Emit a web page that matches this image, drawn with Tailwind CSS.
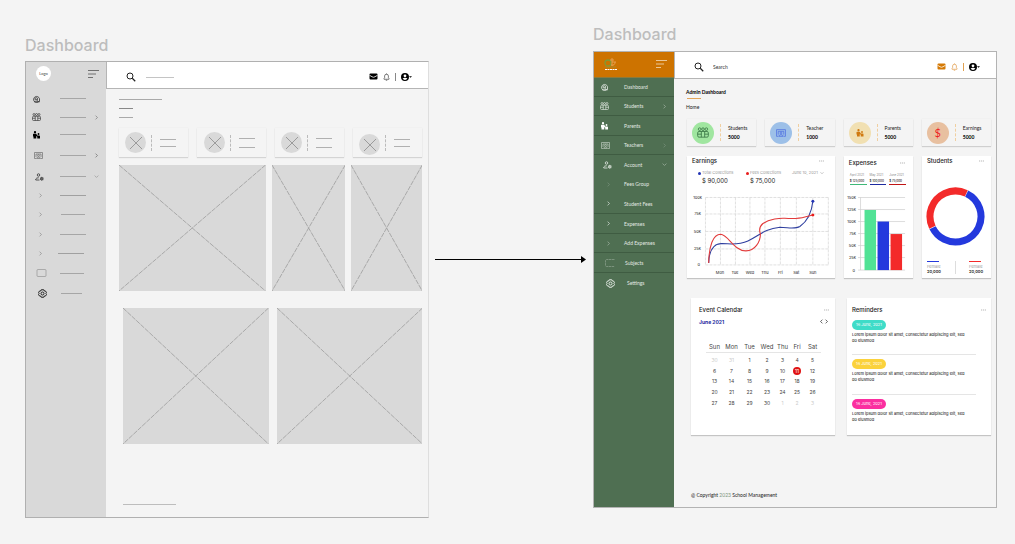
<!DOCTYPE html>
<html lang="en">
<head>
<meta charset="utf-8">
<title>Dashboard wireframe and design</title>
<script src="https://cdn.jsdelivr.net/npm/@tailwindcss/browser@4"></script>
</head>
<body class="bg-[#f4f4f4] font-['Lato',sans-serif] text-[5px] leading-[8px] text-[#333]">

<svg class="hidden" aria-hidden="true">
  <symbol id="i-search" viewBox="0 0 20 20"><circle cx="8" cy="8" r="6" fill="none" stroke="currentColor" stroke-width="2"/><path d="M12.5 12.5 18.5 18.5" stroke="currentColor" stroke-width="2.4"/></symbol>
  <symbol id="i-mail" viewBox="0 0 18 14"><rect x="1" y="1" width="16" height="12" rx="2" fill="currentColor"/><path d="M1 4.500 6 7.500Q9 9.500 12 7.500L17 4.500" fill="none" stroke="#fff" stroke-width="1.600"/></symbol>
  <symbol id="i-bell" viewBox="0 0 14 16"><path d="M2 12.500V11L3.200 9.500V6Q3.200 2.500 7 2.500T10.800 6V9.500L12 11V12.500ZM5.500 14.500H8.500M7 1V2.500" fill="none" stroke="currentColor" stroke-width="1.400"/></symbol>
  <symbol id="i-user" viewBox="0 0 22 16"><path fill-rule="evenodd" fill="currentColor" d="M8 0a8 8 0 1 0 0 16A8 8 0 0 0 8 0ZM8 2.800a2.800 2.800 0 1 1 0 5.600 2.800 2.800 0 0 1 0-5.600ZM3.200 11.200Q5 9.600 8 9.600T12.800 11.200Q11 14 8 14T3.200 11.200Z"/><path fill="currentColor" d="M16 6.500H22L19 9.500Z"/></symbol>
  <symbol id="i-dash" viewBox="0 0 16 16"><g fill="none" stroke="currentColor" stroke-width="1.600"><path d="M13 12.500A6 6 0 1 1 14 7.500V13M3 13.500H14.500"/><path d="M5 9V6.500Q7.500 4 10 6.500V9.500H5M8 10 11.500 13"/></g></symbol>
  <symbol id="i-students" viewBox="0 0 18 16"><g fill="none" stroke="currentColor" stroke-width="1.300"><circle cx="4" cy="3" r="2"/><circle cx="9" cy="3" r="2"/><circle cx="14" cy="3" r="2"/><rect x="1" y="6.500" width="16" height="8.500" rx="2"/><path d="M6.500 6.500V15M11.500 6.500V15M1 10.500H6.500M11.500 10.500H17"/></g></symbol>
  <symbol id="i-parents" viewBox="0 0 16 16"><g fill="currentColor"><circle cx="5" cy="2.500" r="2.300"/><path d="M2 5.500H7.500L9.500 9H13.500Q15 9 15 10.500V15H9.500V11.500L7.500 10V15H2V11H1V6.500Q1 5.500 2 5.500Z"/><circle cx="12" cy="6" r="1.900"/></g></symbol>
  <symbol id="i-teachers" viewBox="0 0 18 14"><g fill="none" stroke="currentColor" stroke-width="1.300"><path d="M4 13H1V1H17V13H14"/><path d="M4 10V4H14V10"/><circle cx="9" cy="7" r="1.800"/><path d="M5 13Q5.500 10 9 10T13 13Z"/></g></symbol>
  <symbol id="i-account" viewBox="0 0 18 16"><g fill="none" stroke="currentColor" stroke-width="1.600"><circle cx="7" cy="4" r="2.500"/><path d="M9 14H1.500V12Q2.500 9.500 7.500 9.500"/><circle cx="13.500" cy="11.500" r="2.600"/><path d="M13.500 7.500V15.500M10 9.500 17 13.500M17 9.500 10 13.500" stroke-width=".9"/></g></symbol>
  <symbol id="i-right" viewBox="0 0 8 8"><path d="M2.500 1 5.500 4 2.500 7" fill="none" stroke="currentColor" stroke-width="1.100"/></symbol>
  <symbol id="i-left" viewBox="0 0 8 8"><path d="M5.500 1 2.500 4 5.500 7" fill="none" stroke="currentColor" stroke-width="1.100"/></symbol>
  <symbol id="i-down" viewBox="0 0 8 8"><path d="M1 2.500 4 5.500 7 2.500" fill="none" stroke="currentColor" stroke-width="1.100"/></symbol>
  <symbol id="i-box" viewBox="0 0 20 16"><rect x="1" y="1" width="18" height="14" rx="2" fill="none" stroke="currentColor" stroke-width="1.200"/></symbol>
  <symbol id="i-book" viewBox="0 0 20 16"><path d="M19 1H3Q1 1 1 3V13Q1 15 3 15H19" fill="none" stroke="currentColor" stroke-width="1.200" stroke-dasharray="5 1"/></symbol>
  <symbol id="i-gear" viewBox="0 0 18 18"><g fill="none" stroke="currentColor"><path stroke-width="2" d="M6.500 1.500H11.500L12 3.500 15 4 17 7.500 15.800 9 17 11 15 14 12 14.500 11.500 16.500H6.500L6 14.500 3 14 1 11 2.200 9 1 7.500 3 4 6 3.500Z"/><circle cx="9" cy="9" r="3" stroke-width="2"/></g></symbol>
  <symbol id="i-menu" viewBox="0 0 12 10"><path d="M1 1.500H12M1 5H9M1 8.500H6" stroke="currentColor" stroke-width=".8"/></symbol>
  <symbol id="i-dots" viewBox="0 0 6 2"><path d="M0 1H1.400M2.300 1H3.700M4.600 1H6" stroke="currentColor"/></symbol>
  <symbol id="i-cross" viewBox="0 0 10 10"><path d="M0 0 10 10M10 0 0 10" stroke="#8f8f8f" stroke-width=".7"/></symbol>
</svg>

<main class="grid min-h-screen grid-cols-[404fr_164fr_404fr] items-start pr-[18px] pl-[25px]">

  <!-- Wireframe -->
  <section class="pt-9">
    <h2 class="mb-[7px] font-['Inter',sans-serif] text-[16px] leading-[18px] font-medium text-[#bdbdbd]">Dashboard</h2>
    <div class="flex border border-[#b0b0b0] border-r-[#dedede]">
      <aside class="w-20 shrink-0 bg-[#d9d9d9] text-[#8a8a8a]">
        <div class="flex h-[27px] items-center justify-between pr-[7px] pb-[4px] pl-[10px]">
          <span class="flex size-[15px] items-center justify-center rounded-full bg-white text-[4px] text-[#444]">Logo</span>
          <button aria-label="Menu" class="text-[#555]"><svg class="h-[10px] w-3"><use href="#i-menu"/></svg></button>
        </div>
        <ul>
          <li class="flex h-[19px] items-center pl-[6px] text-[#333]"><svg class="h-2 w-[9px]"><use href="#i-dash"/></svg><i class="ml-[19px] h-px w-[26px] bg-[#a6a6a6]"></i></li>
          <li class="flex h-[18px] items-center pl-[6px] text-[#333]"><svg class="h-2 w-[9px]"><use href="#i-students"/></svg><i class="ml-[19px] h-px w-[26px] bg-[#a6a6a6]"></i><svg class="ml-2 size-[5px] text-[#777]"><use href="#i-right"/></svg></li>
          <li class="flex h-[17px] items-center pl-[6px] text-black"><svg class="h-2 w-[9px]"><use href="#i-parents"/></svg><i class="ml-[19px] h-px w-[26px] bg-[#a6a6a6]"></i></li>
          <li class="flex h-[25px] items-center pl-[8px] text-[#666]"><svg class="h-[7px] w-[9px]"><use href="#i-teachers"/></svg><i class="ml-[17px] h-px w-[26px] bg-[#a6a6a6]"></i><svg class="ml-2 size-[5px]"><use href="#i-right"/></svg></li>
          <li class="flex h-[17px] items-center pl-[9px] text-[#333]"><svg class="h-2 w-[9px]"><use href="#i-account"/></svg><i class="ml-4 h-px w-[26px] bg-[#a6a6a6]"></i><svg class="ml-2 size-[5px] text-[#999]"><use href="#i-down"/></svg></li>
          <li class="flex h-[20px] items-center pl-3"><svg class="size-[5px]"><use href="#i-right"/></svg><i class="ml-[17px] h-px w-[26px] bg-[#a0a0a0]"></i></li>
          <li class="flex h-[19px] items-center pl-3"><svg class="size-[5px]"><use href="#i-right"/></svg><i class="ml-[18px] h-px w-6 bg-[#a6a6a6]"></i></li>
          <li class="flex h-[20px] items-center pl-3"><svg class="size-[5px]"><use href="#i-right"/></svg><i class="ml-[17px] h-px w-[26px] bg-[#a6a6a6]"></i></li>
          <li class="flex h-[18px] items-center pl-3"><svg class="size-[5px]"><use href="#i-right"/></svg><i class="ml-[15px] h-px w-[26px] bg-[#a0a0a0]"></i></li>
          <li class="flex h-[22px] items-center pl-[10px]"><svg class="h-2 w-[11px]"><use href="#i-box"/></svg><i class="ml-[13px] h-px w-[24px] bg-[#a6a6a6]"></i></li>
          <li class="flex h-[19px] items-center pl-3 text-[#222]"><svg class="size-[9px]"><use href="#i-gear"/></svg><i class="ml-[14px] h-px w-[21px] bg-[#a6a6a6]"></i></li>
        </ul>
      </aside>
      <div class="min-w-0 grow">
        <header class="flex h-[27px] items-center border-b border-l border-[#b5b5b5] bg-white pr-4 pl-[19px] text-black">
          <svg class="mt-1 size-[10px] text-[#222]"><use href="#i-search"/></svg>
          <i class="mt-1 ml-[10px] h-px w-7 bg-[#c4c4c4]"></i>
          <div class="mt-[3px] ml-auto flex items-center gap-[5px]">
            <svg class="h-[7px] w-[9px]"><use href="#i-mail"/></svg>
            <svg class="h-2 w-[7px] text-[#444]"><use href="#i-bell"/></svg>
            <i class="h-2 w-px bg-[#888]"></i>
            <svg class="h-2 w-[11px]"><use href="#i-user"/></svg>
          </div>
        </header>
        <div class="pr-[6px] pb-3 pl-[13px]">
          <div class="pt-[10px]"><i class="block h-px w-[43px] bg-[#a9a9a9]"></i><i class="mt-2 block h-px w-[14px] bg-[#888]"></i><i class="mt-2 block h-px w-[14px] bg-[#a9a9a9]"></i></div>
          <div class="mt-[10px] grid h-[29px] grid-cols-4 gap-[9px]">
            <div class="flex items-center pl-[6px] shadow-[0_1px_1px_#d4d4d4,0_0_1px_#dedede]"><span class="flex size-[21px] items-center justify-center rounded-full bg-[#d9d9d9]"><svg class="size-3"><use href="#i-cross"/></svg></span><i class="ml-[5px] h-4 border-l border-dashed border-[#bbb]"></i><span class="ml-[8px] flex w-4 flex-col gap-[6px]"><i class="h-px bg-[#b0b0b0]"></i><i class="h-px bg-[#b0b0b0]"></i></span></div>
            <div class="flex items-center pl-[7px] shadow-[0_1px_1px_#d4d4d4,0_0_1px_#dedede]"><span class="flex size-[21px] items-center justify-center rounded-full bg-[#d9d9d9]"><svg class="size-3"><use href="#i-cross"/></svg></span><i class="ml-[5px] h-4 border-l border-dashed border-[#bbb]"></i><span class="ml-[8px] flex w-4 flex-col gap-[8px]"><i class="h-px bg-[#b0b0b0]"></i><i class="h-px bg-[#b0b0b0]"></i></span></div>
            <div class="flex items-center pl-[6px] shadow-[0_1px_1px_#d4d4d4,0_0_1px_#dedede]"><span class="flex size-[21px] items-center justify-center rounded-full bg-[#d9d9d9]"><svg class="size-3"><use href="#i-cross"/></svg></span><i class="ml-[5px] h-4 border-l border-dashed border-[#bbb]"></i><span class="ml-[8px] flex w-4 flex-col gap-[8px]"><i class="h-px bg-[#b0b0b0]"></i><i class="h-px bg-[#b0b0b0]"></i></span></div>
            <div class="flex items-center pl-[6px] shadow-[0_1px_1px_#d4d4d4,0_0_1px_#dedede]"><span class="mt-1 flex size-[21px] items-center justify-center rounded-full bg-[#d9d9d9]"><svg class="size-3"><use href="#i-cross"/></svg></span><i class="ml-[5px] h-4 border-l border-dashed border-[#bbb]"></i><span class="ml-[8px] flex w-4 flex-col gap-[6px]"><i class="h-px bg-[#b0b0b0]"></i><i class="h-px bg-[#b0b0b0]"></i></span></div>
          </div>
          <div class="mt-2 grid grid-cols-[146fr_73fr_71fr] gap-[6px]">
            <svg class="h-[126px] w-full bg-[#d9d9d9]"><g stroke="#9c9c9c" stroke-width=".8" stroke-dasharray="5 1"><line x2="100%" y2="100%"/><line x1="100%" x2="0" y2="100%"/></g></svg>
            <svg class="h-[126px] w-full bg-[#d9d9d9]"><g stroke="#9c9c9c" stroke-width=".8" stroke-dasharray="5 1"><line x2="100%" y2="100%"/><line x1="100%" x2="0" y2="100%"/></g></svg>
            <svg class="h-[126px] w-full bg-[#d9d9d9]"><g stroke="#9c9c9c" stroke-width=".8" stroke-dasharray="5 1"><line x2="100%" y2="100%"/><line x1="100%" x2="0" y2="100%"/></g></svg>
          </div>
          <div class="mt-[17px] grid grid-cols-2 gap-2 pl-[4px]">
            <svg class="h-[136px] w-full bg-[#d9d9d9]"><g stroke="#9c9c9c" stroke-width=".8" stroke-dasharray="5 1"><line x2="100%" y2="100%"/><line x1="100%" x2="0" y2="100%"/></g></svg>
            <svg class="h-[136px] w-full bg-[#d9d9d9]"><g stroke="#9c9c9c" stroke-width=".8" stroke-dasharray="5 1"><line x2="100%" y2="100%"/><line x1="100%" x2="0" y2="100%"/></g></svg>
          </div>
          <i class="mt-[60px] ml-[4px] block h-px w-[53px] bg-[#bdbdbd]"></i>
        </div>
      </div>
    </div>
  </section>

  <!-- Connector -->
  <div class="pr-[7px] pl-[6px] pt-[255px]">
    <div class="flex items-center"><i class="h-px grow bg-black"></i><svg class="-ml-[4px] h-[9px] w-[5px]" viewBox="0 0 5 9"><path d="M0 1 5 4.500 0 8Z"/></svg></div>
  </div>

  <!-- Finished design -->
  <section class="pt-[25px]">
    <h2 class="mb-[8px] font-['Inter',sans-serif] text-[16px] leading-[18px] font-medium text-[#bdbdbd]">Dashboard</h2>
    <div class="flex border border-[#b3b3b3]">
      <nav class="w-20 shrink-0 bg-[#4f6f52] text-[#e3e9e3]">
        <div class="flex h-[26px] items-center justify-between border-b border-[#8a7a3c] bg-[#cd7300] pr-[7px] pb-[2px] pl-[10px]">
          <svg class="h-[14px] w-[14px]" viewBox="0 0 14 14"><circle cx="4" cy="6" r="3" fill="none" stroke="#7f9a35" stroke-width="1.300"/><path d="M8 1V9M6 3H10M8 5H12M7 8Q11 9 11 5" fill="none" stroke="#e9a256" stroke-width=".9"/><path d="M1 10H12" stroke="#a2923a" stroke-width=".7"/><path d="M1 12.500H13" stroke="#fff" stroke-width="1.100" stroke-dasharray="2 .5"/></svg>
          <button aria-label="Menu" class="text-[#f3ddbd]"><svg class="h-[10px] w-3"><use href="#i-menu"/></svg></button>
        </div>
        <ul>
          <li class="border-b border-[#3f5c42]"><a href="#" class="flex h-[18px] items-center pl-[6px]"><svg class="h-2 w-[9px]"><use href="#i-dash"/></svg><span class="ml-[15px]">Dashboard</span></a></li>
          <li class="border-b border-[#3f5c42]"><a href="#" class="flex h-[18px] items-center pr-[7px] pl-[6px]"><svg class="h-2 w-[9px]"><use href="#i-students"/></svg><span class="ml-[15px]">Students</span><svg class="ml-auto size-[5px] opacity-60"><use href="#i-right"/></svg></a></li>
          <li class="border-b border-[#3f5c42]"><a href="#" class="flex h-[19px] items-center pl-[6px]"><svg class="h-2 w-[9px] text-white"><use href="#i-parents"/></svg><span class="ml-[15px]">Parents</span></a></li>
          <li class="border-b border-[#3f5c42]"><a href="#" class="flex h-[18px] items-center pr-[7px] pl-[7px]"><svg class="h-[7px] w-[9px] opacity-80"><use href="#i-teachers"/></svg><span class="ml-[14px]">Teachers</span><svg class="ml-auto size-[5px] opacity-30"><use href="#i-right"/></svg></a></li>
          <li>
            <a href="#" class="flex h-[19px] items-center pr-[7px] pl-[9px]"><svg class="h-2 w-[9px]"><use href="#i-account"/></svg><span class="ml-3">Account</span><svg class="ml-auto size-[5px] opacity-60"><use href="#i-down"/></svg></a>
            <a href="#" class="flex h-5 items-center pl-[12px]"><svg class="size-[5px] opacity-30"><use href="#i-right"/></svg><span class="ml-[13px]">Fees Group</span></a>
            <a href="#" class="flex h-[19px] items-center pl-[12px]"><svg class="size-[5px]"><use href="#i-right"/></svg><span class="ml-[13px]">Student Fees</span></a>
          </li>
          <li class="border-y border-[#3f5c42]"><a href="#" class="flex h-[19px] items-center pl-[12px]"><svg class="size-[5px]"><use href="#i-right"/></svg><span class="ml-[13px]">Expenses</span></a></li>
          <li class="border-b border-[#3f5c42]"><a href="#" class="flex h-[18px] items-center pl-[12px]"><svg class="size-[5px] opacity-60"><use href="#i-right"/></svg><span class="ml-[13px]">Add Expenses</span></a></li>
          <li class="border-b border-[#3f5c42]"><a href="#" class="flex h-[19px] items-center pl-[11px]"><svg class="h-2 w-[10px] opacity-50"><use href="#i-book"/></svg><span class="ml-[10px]">Subjects</span></a></li>
          <li><a href="#" class="flex h-5 items-center pl-3"><svg class="size-[9px]"><use href="#i-gear"/></svg><span class="ml-3">Settings</span></a></li>
        </ul>
      </nav>
      <div class="min-w-0 grow text-[#222]">
        <header class="flex h-[27px] items-center border-b border-l border-[#b5b5b5] bg-white pr-4 pl-[19px]">
          <svg class="mt-[3px] size-[10px]"><use href="#i-search"/></svg>
          <input type="search" aria-label="Search" placeholder="Search" class="mt-1 ml-[9px] h-2 w-20 bg-transparent text-[5px] leading-[8px] outline-none placeholder:text-[#333]">
          <div class="mt-[3px] ml-auto flex items-center gap-[5px] text-[#d57a06]">
            <button aria-label="Messages"><svg class="h-[7px] w-[9px]"><use href="#i-mail"/></svg></button>
            <button aria-label="Notifications"><svg class="h-2 w-[7px] text-[#e09a45]"><use href="#i-bell"/></svg></button>
            <i class="h-2 w-px bg-[#e0a050]"></i>
            <button aria-label="Profile" class="text-black"><svg class="h-2 w-[11px]"><use href="#i-user"/></svg></button>
          </div>
        </header>
        <div class="pt-[9px] pr-[5px] pb-2 pl-[13px]">
          <h1 class="-ml-px text-[5px] leading-[8px] font-bold text-black">Admin Dashboard</h1>
          <i class="mt-[2px] block h-px w-[14px] bg-[#e3a55a]"></i>
          <p class="mt-1 -ml-px">Home</p>

          <div class="mt-2 grid grid-cols-4 gap-[9px]">
            <div class="flex h-[27px] items-center pl-[5px] shadow-[0_1px_1px_#cfcfcf,0_0_1px_#dedede]"><span class="flex size-[22px] items-center justify-center rounded-full bg-[#a0e6a0] text-[#3c7a48]"><svg class="h-[11px] w-3"><use href="#i-students"/></svg></span><i class="ml-[6px] h-[17px] border-l border-dashed border-[#f0cfa0]"></i><p class="ml-[7px] leading-[9px]">Students<b class="block text-black">5000</b></p></div>
            <div class="flex h-[27px] items-center pl-[5px] shadow-[0_1px_1px_#cfcfcf,0_0_1px_#dedede]"><span class="flex size-[22px] items-center justify-center rounded-full bg-[#9dc0e8] text-[#4a6be0]"><svg class="h-2 w-[10px]"><use href="#i-teachers"/></svg></span><i class="ml-[6px] h-[17px] border-l border-dashed border-[#f0cfa0]"></i><p class="ml-[7px] leading-[9px]">Teacher<b class="block text-black">1000</b></p></div>
            <div class="flex h-[27px] items-center pl-[5px] shadow-[0_1px_1px_#cfcfcf,0_0_1px_#dedede]"><span class="flex size-[22px] items-center justify-center rounded-full bg-[#f1e0b2] text-[#d07a10]"><svg class="size-[8px]"><use href="#i-parents"/></svg></span><i class="ml-[6px] h-[17px] border-l border-dashed border-[#f0cfa0]"></i><p class="ml-[7px] leading-[9px]">Parents<b class="block text-black">5000</b></p></div>
            <div class="flex h-[27px] items-center pl-[5px] shadow-[0_1px_1px_#cfcfcf,0_0_1px_#dedede]"><span class="flex size-[22px] items-center justify-center rounded-full bg-[#e8c0a0] text-[11px] text-[#ee2222]">$</span><i class="ml-[6px] h-[17px] border-l border-dashed border-[#f0cfa0]"></i><p class="ml-[7px] leading-[9px]">Earnings<b class="block text-black">5000</b></p></div>
          </div>

          <div class="mt-[10px] grid grid-cols-[147fr_69fr_69fr] gap-[9px] font-['Inter',sans-serif]">
            <article class="bg-white shadow-[0_1px_1px_#c4c4c4]">
              <div class="flex items-center justify-between pt-px pr-[11px] pl-[5px]"><h3 class="text-[6px] leading-[8px] font-medium">Earnings</h3><svg class="h-[2px] w-[5px] text-[#aaa]"><use href="#i-dots"/></svg></div>
              <div class="mt-1 flex items-start pr-[11px] pl-[11px]">
                <div class="w-12 whitespace-nowrap"><p class="flex items-center gap-px text-[4px] text-[#999]"><i class="size-[3px] rounded-full bg-[#2334b4]"></i>Total Collections</p><p class="pl-1 text-[6px] leading-[8px]">$ 90,000</p></div>
                <div class="w-[46px] whitespace-nowrap"><p class="flex items-center gap-px text-[4px] text-[#999]"><i class="size-[3px] rounded-full bg-[#e81c1c]"></i>Fees Collections</p><p class="pl-1 text-[6px] leading-[8px]">$ 75,000</p></div>
                <button class="ml-auto flex items-center gap-[2px] text-[4px] leading-[8px] whitespace-nowrap text-[#999]">June 10, 2021<svg class="size-1"><use href="#i-down"/></svg></button>
              </div>
              <svg class="mt-[5px] w-full" viewBox="0 0 148 88" role="img" aria-label="Weekly earnings">
                <g stroke="#d9d9d9" stroke-width=".8" stroke-dasharray="3 1"><path d="M18.500 7.500H142M18.500 24H142M18.500 41.500H142M18.500 59H142M18.500 75H142M18.500 7.500V75M33.500 7.500V75M48.500 7.500V75M63 7.500V75M78 7.500V75M93.500 7.500V75M109.500 7.500V75M126 7.500V75M141.500 7.500V75"/></g>
                <g font-size="4" fill="#222" text-anchor="end"><text x="15" y="9">100k</text><text x="14" y="25.500">75k</text><text x="14" y="43">50k</text><text x="14" y="60.500">25k</text><text x="13" y="76.500">0</text></g>
                <g font-size="4" fill="#222" text-anchor="middle"><text x="33" y="84">Mon</text><text x="48" y="84">Tue</text><text x="63" y="84">Wed</text><text x="78" y="84">Thu</text><text x="93.500" y="84">Fri</text><text x="109.500" y="84">Sat</text><text x="126" y="84">Sun</text></g>
                <g fill="none" stroke-width="1.100"><path stroke="#2f3f9f" d="M21.700 73C22 62 26 54 34 53.700S50 56 61 51 77 39 93 37.300C102 37.500 108 39.500 113 36.500 121 31 125 21 126 11.300"/><path stroke="#e23a3a" d="M21.700 73C22 56 26 44.300 33.700 44.300 41 44.500 47 61 59 61 68 61 73.500 52 73.500 44 72 40 72.500 36.500 76 33.500 83 29 93 28 98 28.300 110 29 113 28.500 118 27Q122 26 126 25"/></g>
                <circle cx="126" cy="11.300" r="1.500" fill="#2334b4"/><circle cx="126" cy="25" r="1.500" fill="#e81c1c"/>
              </svg>
            </article>

            <article class="bg-white pt-[3px] shadow-[0_1px_1px_#c4c4c4]">
              <div class="flex items-center justify-between pr-[8px] pl-[5px]"><h3 class="text-[6px] leading-[8px] font-medium">Expenses</h3><svg class="h-[2px] w-[5px] text-[#aaa]"><use href="#i-dots"/></svg></div>
              <dl class="mt-[5px] grid grid-cols-3 gap-[3px] pr-[7px] pl-[6px] text-[3px] leading-[6px] whitespace-nowrap">
                <div><dt class="text-[#888]">April 2021</dt><dd class="border-b border-[#3fb878] font-medium">$ 125,000</dd></div>
                <div><dt class="text-[#888]">May 2021</dt><dd class="border-b border-[#1d2ba0] font-medium">$ 100,000</dd></div>
                <div><dt class="text-[#888]">June 2021</dt><dd class="border-b border-[#c01515] font-medium">$ 75,000</dd></div>
              </dl>
              <svg class="mt-[7px] w-full" viewBox="0 0 69 85" role="img" aria-label="Expenses by month">
                <path d="M14 5.500H61M14 17.500H61M14 29.500H61M14 41.500H61M14 53.500H61M14 65.500H61M14 78H61M16.500 5.500V78" stroke="#cfcfcf" stroke-width=".7"/>
                <g font-size="4" fill="#222" text-anchor="end"><text x="12" y="7">150k</text><text x="12" y="19">125k</text><text x="12" y="31">100k</text><text x="12" y="43">75k</text><text x="12" y="55">50k</text><text x="12" y="67">25k</text><text x="11" y="79.500">0</text></g>
                <path fill="#51e295" d="M20.500 18H32V78H20.500Z"/><path fill="#2439dd" d="M33.500 29.500H45V78H33.500Z"/><path fill="#f32a2a" d="M46.500 42H58V78H46.500Z"/>
              </svg>
            </article>

            <article class="bg-white pt-px shadow-[0_1px_1px_#c4c4c4]">
              <div class="flex items-center justify-between pr-[7px] pl-[5px]"><h3 class="text-[6px] leading-[8px] font-medium">Students</h3><svg class="h-[2px] w-[5px] text-[#aaa]"><use href="#i-dots"/></svg></div>
              <svg class="mt-[22px] ml-1 size-[59px]" viewBox="0 0 59 59" role="img" aria-label="Students by gender">
                <g fill="none" stroke-width="7"><circle cx="29.500" cy="29.500" r="25.500" pathLength="360" stroke="#2439dd" stroke-dasharray="218 142" transform="rotate(-64 29.500 29.500)"/><circle cx="29.500" cy="29.500" r="25.500" pathLength="360" stroke="#f32a2a" stroke-dasharray="140 220" transform="rotate(155 29.500 29.500)"/></g>
              </svg>
              <div class="mt-[15px] flex justify-between pr-[7px] pl-[5px] text-[4px] leading-[5px]">
                <p class="w-[15px]"><i class="mb-[2px] block h-px w-3 bg-[#2439dd]"></i><span class="block text-[#999]">Female</span><b class="block font-semibold">20,000</b></p>
                <i class="w-px bg-[#ddd]"></i>
                <p class="w-[15px]"><i class="mb-[2px] block h-px w-3 bg-[#f32a2a]"></i><span class="block text-[#999]">Female</span><b class="block font-semibold">20,000</b></p>
              </div>
            </article>
          </div>

          <div class="mt-5 grid grid-cols-2 gap-3 pl-1 font-['Inter',sans-serif]">
            <article class="bg-white pt-2 pb-[26px] shadow-[0_1px_1px_#c4c4c4]">
              <div class="flex items-center justify-between pr-[6px] pl-2"><h3 class="text-[6px] leading-[8px] font-medium">Event Calendar</h3><svg class="h-[2px] w-[5px] text-[#aaa]"><use href="#i-dots"/></svg></div>
              <div class="mt-1 flex items-center pr-[6px] pl-2"><b class="mr-auto text-[#1d2ba0]">June 2021</b><button aria-label="Previous month"><svg class="size-[5px]"><use href="#i-left"/></svg></button><button aria-label="Next month"><svg class="size-[5px]"><use href="#i-right"/></svg></button></div>
              <table class="mt-[15px] ml-[15px] w-[115px] table-fixed text-center text-[5px] leading-[8px] text-[#444]">
                <colgroup><col class="w-[17px]"><col class="w-[17px]"><col class="w-[19px]"><col class="w-[16px]"><col class="w-[15px]"><col class="w-[14px]"><col class="w-[17px]"></colgroup>
                <thead><tr class="h-[12px] border-b border-[#e5e5e5] text-[6px] [&>th]:p-0 [&>th]:font-normal"><th>Sun</th><th>Mon</th><th>Tue</th><th>Wed</th><th>Thu</th><th>Fri</th><th>Sat</th></tr></thead>
                <tbody>
                  <tr class="h-[13px]"><td class="text-[#ccc]">30</td><td class="text-[#ccc]">31</td><td>1</td><td>2</td><td>3</td><td>4</td><td>5</td></tr>
                  <tr class="h-[10px]"><td>6</td><td>7</td><td>8</td><td>9</td><td>10</td><td><span class="mx-auto block size-[8px] rounded-full bg-[#e01212] text-white">11</span></td><td>12</td></tr>
                  <tr class="h-[11px]"><td>13</td><td>14</td><td>15</td><td>16</td><td>17</td><td>18</td><td>19</td></tr>
                  <tr class="h-[11px]"><td>20</td><td>21</td><td>22</td><td>23</td><td>24</td><td>25</td><td>26</td></tr>
                  <tr class="h-[11px]"><td>27</td><td>28</td><td>29</td><td>30</td><td class="text-[#ccc]">1</td><td class="text-[#ccc]">2</td><td class="text-[#ccc]">3</td></tr>
                </tbody>
              </table>
            </article>
            <article class="bg-white pt-2 pr-[5px] pl-[5px] shadow-[0_1px_1px_#c4c4c4]">
              <div class="flex items-center justify-between"><h3 class="text-[6px] leading-[8px] font-medium">Reminders</h3><svg class="h-[2px] w-[5px] text-[#aaa]"><use href="#i-dots"/></svg></div>
              <ul class="mr-[10px] text-[4px] leading-[6px] text-black">
                <li class="mt-[6px] h-[35px] border-b border-[#e5e5e5]"><time class="block h-[10px] w-[34px] rounded-full bg-[#3fdcc8] text-center leading-[10px] text-white">16 June, 2021</time><p class="mt-[2px]">Lorem ipsum dolor sit amet, consectetur adipiscing elit, sed<br>do eiusmod</p></li>
                <li class="mt-1 h-[36px] border-b border-[#e5e5e5]"><time class="block h-[10px] w-[34px] rounded-full bg-[#fbd23c] text-center leading-[10px] text-white">16 June, 2021</time><p class="mt-[2px]">Lorem ipsum dolor sit amet, consectetur adipiscing elit, sed<br>do eiusmod</p></li>
                <li class="mt-1"><time class="block h-[10px] w-[34px] rounded-full bg-[#fb2fa0] text-center leading-[10px] text-white">16 June, 2021</time><p class="mt-[2px]">Lorem ipsum dolor sit amet, consectetur adipiscing elit, sed<br>do eiusmod</p></li>
              </ul>
            </article>
          </div>
          <footer class="mt-[56px] pl-1">@ Copyright <span class="text-[#7d967f]">2023</span> School Management</footer>
        </div>
      </div>
    </div>
  </section>
</main>
</body>
</html>
